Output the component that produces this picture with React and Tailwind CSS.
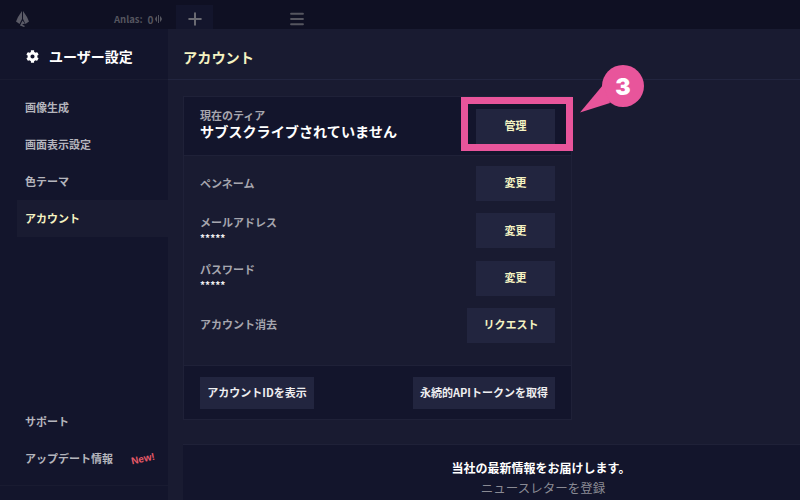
import { Plus, Menu } from 'lucide-react'
import { FaCog } from 'react-icons/fa'

const jp = { fontFamily: '"Noto Sans CJK JP", "Noto Sans", sans-serif' }

function NavItem({ label, active }) {
  return (
    <div className={`h-[37px] ml-[17px] pl-2 flex items-center text-[11px] font-bold ${active ? 'bg-[#191b31] text-[#f5f3c2]' : 'text-[#b5b5bd]'}`}>
      {label}
    </div>
  )
}

function ActionButton({ label, wide }) {
  return (
    <button className={`h-[35px] pb-[2px] ${wide ? 'w-[88px]' : 'w-[79px]'} bg-[#22253f] text-[#f5f3c2] text-[11px] font-bold flex items-center justify-center`}>
      {label}
    </button>
  )
}

function FooterButton({ label, width }) {
  return (
    <button className={`h-[32px] ${width} bg-[#22253f] text-[#eeeef0] text-[11px] font-bold flex items-center justify-center whitespace-nowrap`}>
      {label}
    </button>
  )
}

function Row({ label, value, wide, btn = '変更' }) {
  return (
    <div className="h-[35px] flex items-center justify-between">
      <div className={`flex flex-col ${value ? 'pb-[3px]' : 'pb-[2px]'}`}>
        <span className="text-[11px] font-bold text-[#a6a6ae] leading-[16px]">{label}</span>
        {value && <span className="text-[10px] font-bold text-[#eeeef0] leading-[15px]">{value}</span>}
      </div>
      <ActionButton label={btn} wide={wide} />
    </div>
  )
}

export default function App() {
  return (
    <div className="relative w-[800px] h-[500px] overflow-hidden bg-[#191b31] flex flex-col" style={jp}>
      <div className="h-[29px] shrink-0 bg-[#0f1023] flex items-end">
        <div className="w-[114px] h-[24px] pl-[16px] pt-[4px] flex items-center">
          <svg width="13" height="16" viewBox="0 0 13 16" fill="#5a5a66">
            <path d="M6 0 L6 8 L3.5 13 L0 10.5 L2 6 Z" />
            <path d="M7 0 L11 6 L13 10.5 L9.5 13 L7 8 Z" />
            <path d="M6.5 9.5 L9 12.5 L6 13.5 L9 15 L8 16 L4 14.5 Z" />
          </svg>
        </div>
        <div className="w-[62px] h-[24px] pt-[4px] flex items-center text-[9.5px] font-bold text-[#55555f]">
          <span>Anlas:</span>
          <span className="ml-[5px] text-[10px]">0</span>
          <svg className="ml-[2px]" width="7" height="8" viewBox="0 0 7 8" fill="#55555f">
            <path d="M3 0h1v8H3zM1 2l1-1v6L1 6 0 4zM6 2 5 1v6l1-1 1-2z" />
          </svg>
        </div>
        <div className="w-[37px] h-[24px] pt-[4px] bg-[#13152c] flex items-center justify-center">
          <Plus size={20} strokeWidth={2.4} className="text-[#6a6a72]" />
        </div>
        <div className="ml-[75px] h-[24px] pt-[4px] flex items-center">
          <Menu size={18} strokeWidth={2.4} className="text-[#55555f]" />
        </div>
      </div>

      <div className="flex-1 flex min-h-0">
        <aside className="w-[168px] shrink-0 bg-[#13152c] flex flex-col">
          <div className="h-[51px] shrink-0 border-b border-[#191b31] flex items-center gap-[10px] pl-[26px] pt-[4px] text-white text-[14px] font-bold">
            <FaCog size={13} />
            <span>ユーザー設定</span>
          </div>
          <div className="pt-[9px]">
            <NavItem label="画像生成" />
            <NavItem label="画面表示設定" />
            <NavItem label="色テーマ" />
            <NavItem label="アカウント" active />
          </div>
          <div className="mt-auto pb-[8px]">
            <NavItem label="サポート" />
            <div className="relative">
              <NavItem label="アップデート情報" />
              <span className="absolute left-[131px] top-[11px] -rotate-12 text-[10px] font-bold text-[#e85a68]" style={{ fontFamily: '"Liberation Sans", sans-serif' }}>New!</span>
            </div>
          </div>
          <div className="h-[15px] shrink-0 border-t border-[#191b31]" />
        </aside>

        <main className="flex-1 min-w-0 flex flex-col pl-[15px]">
          <div className="-ml-[15px] h-[51px] shrink-0 border-b border-[#22253f] pl-[15px] pt-[8px] flex items-center text-[#f5f3c2] text-[14.2px] font-bold">
            アカウント
          </div>

          <section className="mt-[16px] w-[389px] h-[324px] shrink-0 border border-[#1f2138] flex flex-col">
            <div className="h-[59px] bg-[#13152c] border-b border-[#1f2138] px-[16px] flex items-center justify-between">
              <div className="flex flex-col pb-[4px]">
                <span className="text-[11px] font-bold text-[#a6a6ae] leading-[14px]">現在のティア</span>
                <span className="text-[14.15px] font-bold text-white leading-[18px]">サブスクライブされていません</span>
              </div>
              <ActionButton label="管理" />
            </div>
            <div className="flex-1 px-[16px] pt-[10px] flex flex-col gap-[12.33px]">
              <Row label="ペンネーム" />
              <Row label="メールアドレス" value="*****" />
              <Row label="パスワード" value="*****" />
              <Row label="アカウント消去" btn="リクエスト" wide />
            </div>
            <div className="h-[54px] bg-[#13152c] border-t border-[#1f2138] px-[16px] flex items-center justify-between">
              <FooterButton label="アカウントIDを表示" width="w-[114px]" />
              <FooterButton label="永続的APIトークンを取得" width="w-[142px]" />
            </div>
          </section>

          <section className="mt-[24px] w-[716px] flex-1 bg-[#13152c] border-t border-[#1f2138] flex flex-col items-center pt-[14px]">
            <span className="text-[12px] font-bold text-white leading-[18px]">当社の最新情報をお届けします。</span>
            <span className="ml-[4px] text-[12.5px] text-[#8a8a94] leading-[20px] mt-[1px]">ニュースレターを登録</span>
          </section>
        </main>
      </div>

      <div className="absolute left-[461px] top-[97px] w-[112px] h-[54px] border-[7px] border-[#e8559b]" />
      <svg className="absolute left-[575px] top-[60px]" width="75" height="60" viewBox="0 0 75 60" fill="#e8559b">
        <circle cx="48" cy="26" r="21" />
        <path d="M5 52.5 L28 25 L35 43 Z" />
      </svg>
      <span className="absolute left-[608px] top-[72px] w-[30px] text-center text-white text-[23px] font-black leading-[30px]" style={{ fontFamily: 'Inter, sans-serif' }}>3</span>
    </div>
  )
}
